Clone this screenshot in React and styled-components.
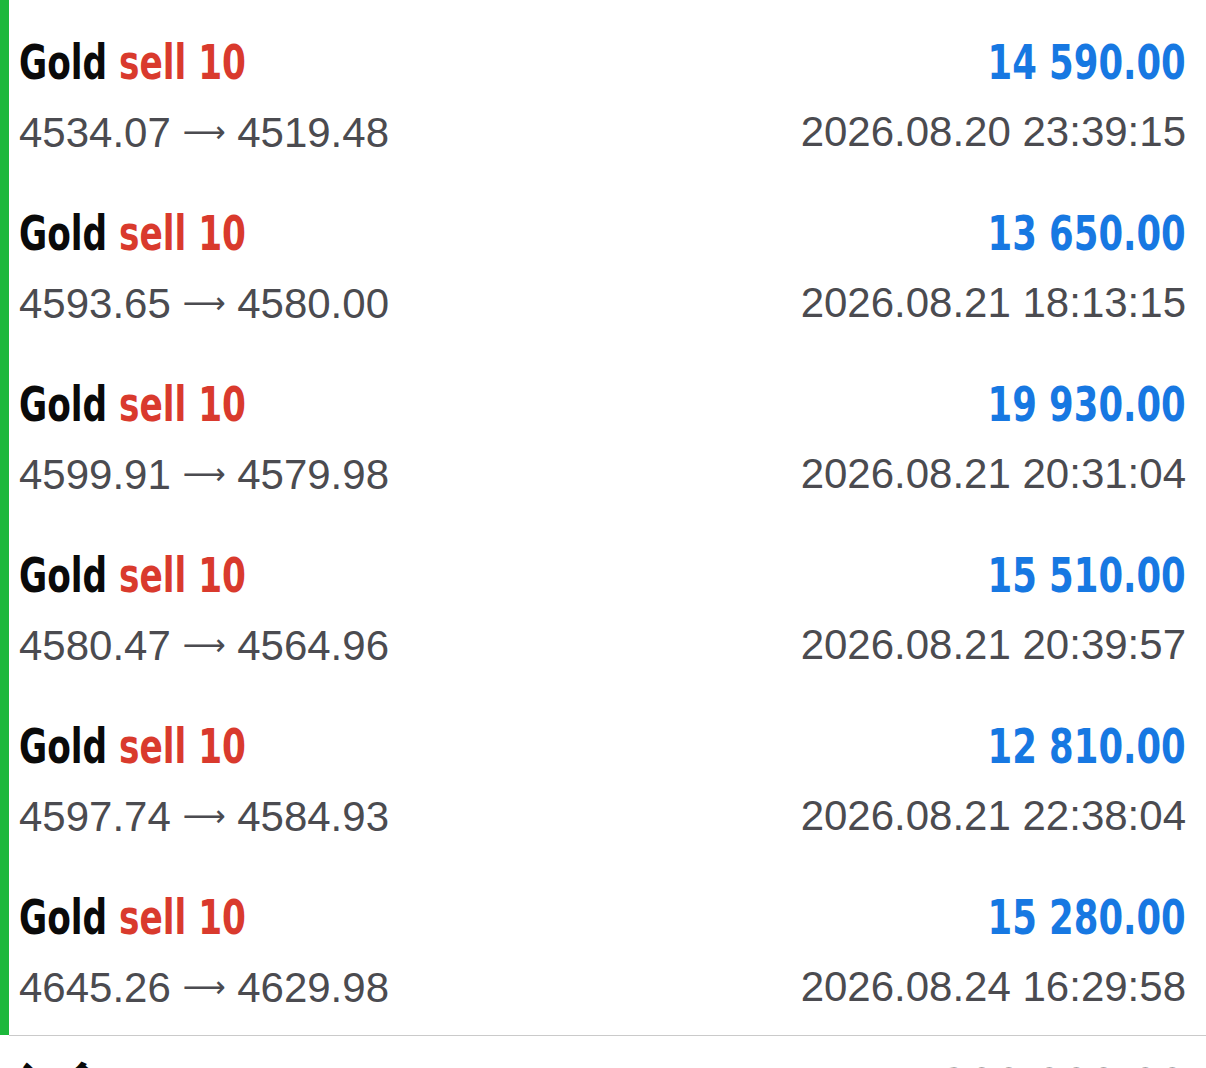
import React from "react";
import styled, { createGlobalStyle } from "styled-components";

const GlobalStyle = createGlobalStyle`
  html, body {
    margin: 0;
    padding: 0;
    background: #ffffff;
    overflow: hidden;
  }
  body {
    font-family: "Liberation Sans", Arial, sans-serif;
  }
`;

const Page = styled.div`
  width: 1206px;
  height: 1068px;
  overflow: hidden;
  background: #fff;
`;

const Group = styled.section`
  border-left: 9px solid #1cb83b;
  padding-top: 9px;
`;

const Row = styled.div`
  display: grid;
  grid-template-columns: 1fr auto;
  grid-template-rows: 56px 52px;
  row-gap: 16px;
  align-items: center;
  height: 171px;
  box-sizing: border-box;
  padding: ${(p) => (p.$next ? "22px" : "25px")} 20px 0 10px;
`;

const Title = styled.div`
  font-family: "DejaVu Sans Condensed", "DejaVu Sans", "Noto Sans CJK SC", sans-serif;
  font-weight: 700;
  font-size: 48px;
  line-height: 56px;
  color: #0a0a0a;
  white-space: nowrap;
`;

const Narrow = styled.span`
  display: inline-block;
  transform: scaleX(${(p) => p.$scale || 0.8});
  transform-origin: ${(p) => (p.$right ? "right" : "left")} center;
`;

const Side = styled.span`
  color: #d93a2d;
`;

const Amount = styled.div`
  justify-self: end;
  font-family: "DejaVu Sans Condensed", "DejaVu Sans", sans-serif;
  font-weight: 700;
  font-size: 48px;
  line-height: 56px;
  color: ${(p) => p.$color || "#1778e2"};
  white-space: nowrap;
`;

const Sub = styled.div`
  font-family: "Liberation Sans", Arial, sans-serif;
  font-size: 42px;
  line-height: 52px;
  color: #4b4b50;
  white-space: nowrap;
  justify-self: ${(p) => (p.$right ? "end" : "start")};
`;

const Arrow = styled.span`
  font-family: "DejaVu Sans", sans-serif;
  font-size: 30px;
  vertical-align: 5px;
`;

const Divider = styled.div`
  height: 1px;
  margin-left: 9px;
  background: #cacaca;
`;

const deals = [
  { open: "4534.07", close: "4519.48", profit: "14 590.00", time: "2026.08.20 23:39:15" },
  { open: "4593.65", close: "4580.00", profit: "13 650.00", time: "2026.08.21 18:13:15" },
  { open: "4599.91", close: "4579.98", profit: "19 930.00", time: "2026.08.21 20:31:04" },
  { open: "4580.47", close: "4564.96", profit: "15 510.00", time: "2026.08.21 20:39:57" },
  { open: "4597.74", close: "4584.93", profit: "12 810.00", time: "2026.08.21 22:38:04" },
  { open: "4645.26", close: "4629.98", profit: "15 280.00", time: "2026.08.24 16:29:58" },
];

export default function App() {
  return (
    <Page>
      <GlobalStyle />
      <Group>
        {deals.map((d, i) => (
          <Row key={i}>
            <Title>
              <Narrow $scale={0.795}>
                Gold <Side>sell 10</Side>
              </Narrow>
            </Title>
            <Amount>
              <Narrow $right $scale={0.82}>{d.profit}</Narrow>
            </Amount>
            <Sub>
              {d.open} <Arrow>⟶</Arrow> {d.close}
            </Sub>
            <Sub $right>{d.time}</Sub>
          </Row>
        ))}
      </Group>
      <Divider />
      <Row $next>
        <Title>入金</Title>
        <Amount $color="#555">
          <Narrow $right $scale={0.9}>200 000.00</Narrow>
        </Amount>
      </Row>
    </Page>
  );
}
